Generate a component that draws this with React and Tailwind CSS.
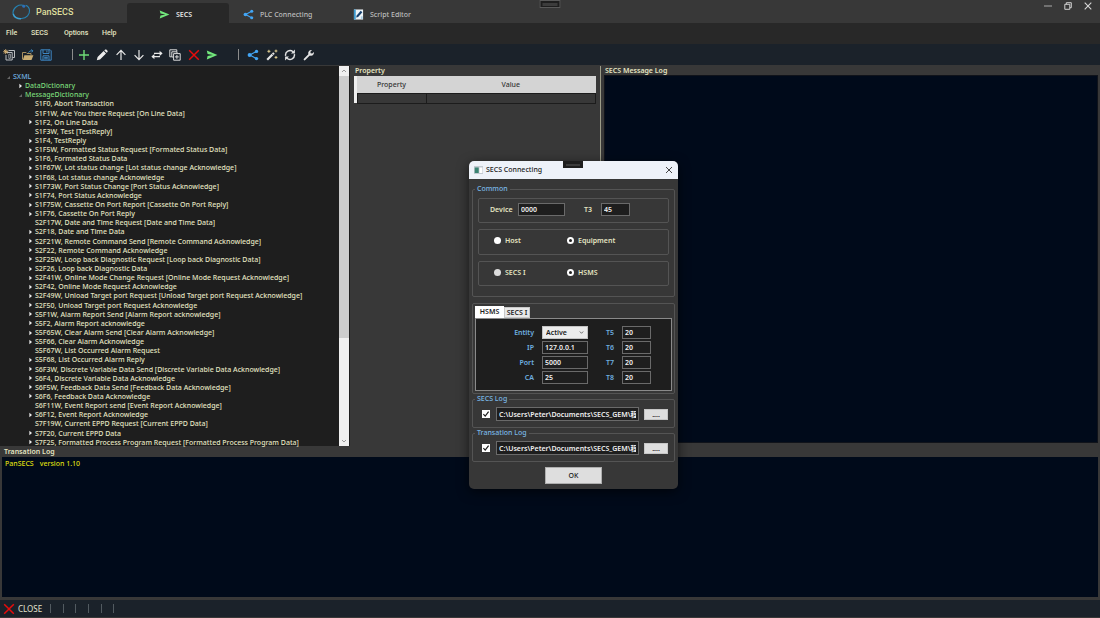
import React, { useState } from "react";

const messages = [
  [0, "S1F0, Abort Transaction"],
  [0, "S1F1W, Are You there Request [On Line Data]"],
  [1, "S1F2, On Line Data"],
  [0, "S1F3W, Test [TestReply]"],
  [1, "S1F4, TestReply"],
  [1, "S1F5W, Formatted Status Request [Formated Status Data]"],
  [1, "S1F6, Formated Status Data"],
  [1, "S1F67W, Lot status change [Lot status change Acknowledge]"],
  [1, "S1F68, Lot status change Acknowledge"],
  [1, "S1F73W, Port Status Change [Port Status Acknowledge]"],
  [1, "S1F74, Port Status Acknowledge"],
  [1, "S1F75W, Cassette On Port Report [Cassette On Port Reply]"],
  [1, "S1F76, Cassette On Port Reply"],
  [0, "S2F17W, Date and Time Request [Date and Time Data]"],
  [1, "S2F18, Date and Time Data"],
  [1, "S2F21W, Remote Command Send [Remote Command Acknowledge]"],
  [1, "S2F22, Remote Command Acknowledge"],
  [1, "S2F25W, Loop back Diagnostic Request [Loop back Diagnostic Data]"],
  [1, "S2F26, Loop back Diagnostic Data"],
  [1, "S2F41W, Online Mode Change Request [Online Mode Request Acknowledge]"],
  [1, "S2F42, Online Mode Request Acknowledge"],
  [1, "S2F49W, Unload Target port Request [Unload Target port Request Acknowledge]"],
  [1, "S2F50, Unload Target port Request Acknowledge"],
  [1, "S5F1W, Alarm Report Send [Alarm Report acknowledge]"],
  [1, "S5F2, Alarm Report acknowledge"],
  [1, "S5F65W, Clear Alarm Send [Clear Alarm Acknowledge]"],
  [1, "S5F66, Clear Alarm Acknowledge"],
  [0, "S5F67W, List Occurred Alarm Request"],
  [1, "S5F68, List Occurred Alarm Reply"],
  [1, "S6F3W, Discrete Variable Data Send [Discrete Variable Data Acknowledge]"],
  [1, "S6F4, Discrete Variable Data Acknowledge"],
  [1, "S6F5W, Feedback Data Send [Feedback Data Acknowledge]"],
  [1, "S6F6, Feedback Data Acknowledge"],
  [0, "S6F11W, Event Report send [Event Report Acknowledge]"],
  [1, "S6F12, Event Report Acknowledge"],
  [0, "S7F19W, Current EPPD Request [Current EPPD Data]"],
  [1, "S7F20, Current EPPD Data"],
  [1, "S7F25, Formatted Process Program Request [Formatted Process Program Data]"],
];

const Svg = ({ children, className = "size-3" }) => (
  <svg viewBox="0 0 12 12" fill="none" className={className} aria-hidden="true">
    {children}
  </svg>
);

const SendIcon = ({ className }) => (
  <Svg className={className}>
    <path d="M.8 1.6 11.4 6 .8 10.4 1.6 7 7 6 1.6 5z" fill="#72e87c" />
  </Svg>
);
const ShareIcon = ({ className }) => (
  <Svg className={className}>
    <path d="M9.4 2.4 2.8 6l6.6 3.6" stroke="#42a5f5" strokeWidth="1.2" />
    <circle cx="9.5" cy="2.4" r="1.7" fill="#42a5f5" />
    <circle cx="2.6" cy="6" r="2" fill="#42a5f5" />
    <circle cx="9.5" cy="9.6" r="1.7" fill="#42a5f5" />
  </Svg>
);
const NewIcon = () => (
  <Svg>
    <path d="M5.5 1.5h6v7h-2M4 3.5h5.2v7.5H3V6" stroke="#b9bcbf" />
    <path d="M5.8 5.2v4.2h1.6V5.2z" stroke="#b9bcbf" strokeWidth=".7" />
    <path d="M2.7.2v5M.2 2.7h5M.9.9l3.6 3.6M4.5.9.9 4.5" stroke="#dcb878" strokeWidth=".9" />
  </Svg>
);
const OpenIcon = () => (
  <Svg>
    <path d="M.5 10.5v-7h3.6l1 1H9v1.700" stroke="#a88f5e" />
    <path d="M2.4 6.2h9L9.5 11H.8z" fill="#c9ac72" />
    <path d="M6.5 3.6c1-1.7 2.3-2 4-1.7M9.3.5l1.6 1.4-1.5 1.5" stroke="#3f8cc4" />
  </Svg>
);
const SaveIcon = () => (
  <Svg>
    <path d="M.8.8h9.4l1 1v9.4H.8zM3 .8v3.7h6V.8M3 11.2V6.8h6v4.4M6.9 1.5v2M4.2 8.4h3.6M4.2 9.8h3.6" stroke="#3d86c2" />
  </Svg>
);
const PlusIcon = () => (
  <Svg>
    <path d="M6 1v10M1 6h10" stroke="#6fdc78" strokeWidth="1.4" />
  </Svg>
);
const PencilIcon = () => (
  <Svg>
    <path d="m.8 11.2.8-3.1L7.6 2l2.4 2.4-6 6zM8.3 1.4l.8-.8q.6-.4 1.2 0l1.2 1.2q.4.6 0 1.1l-.8.8z" fill="#ececec" />
  </Svg>
);
const UpIcon = () => (
  <Svg>
    <path d="M6 11V1.4M1.6 5.8 6 1.4l4.4 4.4" stroke="#e8e8e8" strokeWidth="1.2" />
  </Svg>
);
const DownIcon = () => (
  <Svg>
    <path d="M6 1v9.6M1.6 6.2 6 10.6l4.4-4.4" stroke="#e8e8e8" strokeWidth="1.2" />
  </Svg>
);
const SwapIcon = () => (
  <Svg>
    <path d="M3 4.4h8M1 7.6h8" stroke="#e8e8e8" strokeWidth="1.1" />
    <path d="m8.6 1.8 3 2.6-3 2.6zM3.4 5 .4 7.6l3 2.6z" fill="#e8e8e8" />
  </Svg>
);
const CopyIcon = () => (
  <Svg>
    <path d="M2.6 7.8H.8V.8h7v1.8M8 4.2V2.8H2.8V8h1.4M4.6 4.6h6.6v6.6H4.6z" stroke="#dcdcdc" />
    <path d="M7.9 6v3.8M6 7.9h3.8" stroke="#dcdcdc" />
  </Svg>
);
const RedX = () => (
  <Svg>
    <path d="m1.2 1.2 9.6 9.6M10.8 1.2l-9.6 9.6" stroke="#e80c0c" strokeWidth="1.5" />
  </Svg>
);
const WandIcon = () => (
  <Svg>
    <path d="M1.2 10.8 8 4" stroke="#e4e4e4" strokeWidth="2.200" />
    <path d="M5.600 4.400 7.600 6.400" stroke="#1b222a" strokeWidth=".7" />
    <path d="M2.9.8v3M1.4 2.3h3M10 .6v2.8M8.6 2h2.8M10 7v2.8M8.6 8.4h2.8" stroke="#e2cf92" strokeWidth="1" />
  </Svg>
);
const RefreshIcon = () => (
  <Svg>
    <path d="M1.6 6.8A4.5 4.5 0 0 1 9 2.7M10.4 5.2A4.5 4.5 0 0 1 3 9.3" stroke="#e4e4e4" strokeWidth="1.4" />
    <path d="M10.9.6v4H7zM1.1 11.4v-4H5z" fill="#e4e4e4" />
  </Svg>
);
const WrenchIcon = () => (
  <Svg>
    <path d="m1.6 10.4 5-5" stroke="#e4e4e4" strokeWidth="1.9" strokeLinecap="round" />
    <path d="M10.9 2.9 9.2 4.5 7.6 4.3 7.4 2.8 9 1.1A3.1 3.1 0 0 0 5.3 5q.7 2 2.8 1.7a3.1 3.1 0 0 0 2.8-3.8z" fill="#e4e4e4" />
  </Svg>
);
const ScriptIcon = ({ className }) => (
  <Svg className={className}>
    <path d="M1 .5h10v11H1z" fill="#eef4f8" />
    <path d="M1 .5h2v11H1z" fill="#3d9bd0" />
    <path d="M3.4 9.2 4 7l4.4-5 1.8 1.6-4.6 5z" fill="#17406e" />
    <path d="M8.6 8h2v3h-2z" fill="#a9cbe0" />
  </Svg>
);

const ToolButton = ({ label, icon: Icon }) => (
  <button type="button" aria-label={label} className="block">
    <Icon />
  </button>
);

const MainTab = ({ label, icon: Icon, active, className, onClick }) => (
  <button
    type="button"
    role="tab"
    aria-selected={active}
    onClick={onClick}
    className={`mt-[3px] flex h-5 items-center gap-[6px] rounded-t-[3px] pt-[3px] ${className} ${
      active ? "bg-[#282828] font-semibold text-[#e6e6e6]" : "font-medium text-[#bdbdbd]"
    }`}
  >
    <Icon className="size-[11px]" />
    {label}
  </button>
);

const TreeRow = ({ open, branch, label, depth, color = "text-[#e4e4c2]" }) => (
  <li
    role="treeitem"
    aria-expanded={branch ? open : undefined}
    className={`flex min-h-0 flex-1 items-center gap-[2px] leading-[9px] ${depth} ${color}`}
  >
    <span className="flex w-[6px] justify-center">
      {branch && (
        <button type="button" aria-label={`Toggle ${label}`} className="block">
          <svg viewBox="0 0 5 6" className="h-[6px] w-[5px]" aria-hidden="true">
            {open ? <path d="M4 2v3H1z" fill="#686868" /> : <path d="M1.4.8 4 3 1.4 5.2z" fill="#ededed" />}
          </svg>
        </button>
      )}
    </span>
    <span className="whitespace-nowrap">{label}</span>
  </li>
);

const inputBase = "border border-[#6a6a6a] bg-[#1e1e1e] px-[2px] font-semibold text-[#f0f0f0] outline-none";

const Radio = ({ name, id, label, muted, hollow, defaultChecked }) => (
  <div className="flex items-center gap-[4px]">
    <input
      type="radio"
      id={id}
      name={name}
      defaultChecked={defaultChecked}
      className={`size-[7px] appearance-none rounded-full ${
        hollow ? "border-2 border-white bg-[#222]" : muted ? "bg-[#dcdcdc]" : "bg-white"
      }`}
    />
    <label htmlFor={id}>{label}</label>
  </div>
);

const groupBox = "rounded-[2px] border border-[#545454]";

const LogGroup = ({ title, id }) => (
  <fieldset className={`${groupBox} mt-px pt-1 pr-[6px] pb-[6px] pl-[9px]`}>
    <legend className="-ml-[7px] px-[2px] leading-[8px] font-medium text-[#7ab8e6]">{title}</legend>
    <div className="flex items-center">
      <span className="relative block size-[8px]">
        <input
          type="checkbox"
          defaultChecked
          aria-label={`Enable ${title}`}
          className="peer block size-[8px] appearance-none bg-white"
        />
        <svg viewBox="0 0 8 8" fill="none" className="pointer-events-none absolute inset-0 hidden size-2 peer-checked:block" aria-hidden="true">
          <path d="m1.4 4.2 1.8 1.9 3.4-4.4" stroke="#1c1c1c" strokeWidth="1.2" />
        </svg>
      </span>
      <input
        id={id}
        type="text"
        aria-label={`${title} path`}
        defaultValue={"C:\\Users\\Peter\\Documents\\SECS_GEM\\程"}
        className={`${inputBase} ml-[6px] h-[14px] min-w-0 flex-1`}
      />
      <button type="button" className="ml-[5px] h-[11px] w-[24px] border border-[#c6c6c6] bg-[#dedede] leading-[9px] text-[#222]" aria-label={`Browse ${title}`}>
        ....
      </button>
    </div>
  </fieldset>
);

const Field = ({ id, label, value }) => (
  <>
    <label htmlFor={id} className="self-center pr-2 text-right text-[#6fb0e0]">
      {label}
    </label>
    <input id={id} type="text" defaultValue={value} className={`${inputBase} h-[13px] w-full min-w-0`} />
  </>
);

function ConnectingDialog() {
  return (
    <section
      role="dialog"
      aria-label="SECS Connecting"
      className="absolute top-[161px] left-[469px] w-[209px] overflow-hidden rounded-[5px] bg-[#373737] font-semibold text-[#e4e4c2] shadow-[0_3px_12px_rgba(0,0,0,0.6)]"
    >
      <header className="relative flex h-[18px] items-center bg-[#eef2f9] px-[5px] pb-px font-medium text-[#1c1c1c]">
        <svg viewBox="0 0 9 8" className="h-2 w-[9px]" aria-hidden="true">
          <path d="M0 0h9v8H0z" fill="#c3cad2" />
          <path d="M.7 1.4h4V7h-4z" fill="#3a8372" />
          <path d="M5.4 1.4h3V7h-3z" fill="#fff" />
        </svg>
        <span className="ml-[3px] flex-1">SECS Connecting</span>
        <button type="button" aria-label="Close dialog">
          <svg viewBox="0 0 8 8" className="size-2" aria-hidden="true">
            <path d="m1 1 6 6M7 1 1 7" stroke="#333" strokeWidth=".9" />
          </svg>
        </button>
        <span className="absolute top-0 left-[94px] flex h-[7px] w-[20px] items-center justify-center bg-[#1e1e1e]">
          <span className="h-[2px] w-[14px] bg-[#3c3c3c]" />
        </span>
      </header>

      <form className="px-[3px] pt-[6px] pb-[5px]" onSubmit={(e) => e.preventDefault()}>
        <fieldset className={`${groupBox} px-[5px] pt-[5px] pb-[10px]`}>
          <legend className="-ml-[3px] px-[2px] leading-[8px] font-medium text-[#7ab8e6]">Common</legend>
          <div className={`${groupBox} flex h-[25px] items-center pb-[3px] pl-[11px]`}>
            <label htmlFor="device" className="w-[28px]">Device</label>
            <input id="device" type="text" defaultValue="0000" className={`${inputBase} h-[13px] w-[47px]`} />
            <label htmlFor="t3" className="ml-[19px] w-[17px]">T3</label>
            <input id="t3" type="text" defaultValue="45" className={`${inputBase} h-[13px] w-[29px]`} />
          </div>
          <div className={`${groupBox} mt-[6px] grid h-[26px] grid-cols-[73px_1fr] items-center pb-[3px] pl-[15px]`}>
            <Radio id="host" name="role" label="Host" />
            <Radio id="equipment" name="role" label="Equipment" hollow defaultChecked />
          </div>
          <div className={`${groupBox} mt-[6px] grid h-[25px] grid-cols-[73px_1fr] items-center pb-[3px] pl-[15px]`}>
            <Radio id="secs1" name="protocol" label="SECS I" muted />
            <Radio id="hsms" name="protocol" label="HSMS" hollow defaultChecked />
          </div>
        </fieldset>

        <div className={`${groupBox} mt-[6px] p-[2px]`}>
          <div role="tablist" className="flex h-3 items-end">
            <button type="button" role="tab" aria-selected="true" className="h-3 w-[29px] bg-white leading-[12px] text-[#222]">
              HSMS
            </button>
            <button type="button" role="tab" aria-selected="false" className="h-[11px] w-[26px] border border-[#c8c8c8] bg-[#e8e8e8] leading-[10px] text-[#222]">
              SECS I
            </button>
          </div>
          <div className="grid grid-cols-[66px_46px_34px_29px] gap-y-[2px] border border-[#8a8a8a] bg-[#1e1e1e] pt-[7px] pb-[6px]">
            <label htmlFor="entity" className="self-center pr-2 text-right text-[#6fb0e0]">Entity</label>
            <div className="relative">
              <select id="entity" className="block h-[13px] w-full appearance-none border border-[#c4c4c4] bg-[#ececec] px-[3px] leading-[11px] text-[#222]">
                <option>Active</option>
                <option>Passive</option>
              </select>
              <svg viewBox="0 0 5 5" fill="none" className="pointer-events-none absolute top-1 right-1 size-[5px]" aria-hidden="true">
                <path d="m.8 1.5 1.7 1.8 1.7-1.8" stroke="#555" strokeWidth=".8" />
              </svg>
            </div>
            <Field id="t5" label="T5" value="20" />
            <Field id="ip" label="IP" value="127.0.0.1" />
            <Field id="t6" label="T6" value="20" />
            <Field id="port" label="Port" value="5000" />
            <Field id="t7" label="T7" value="20" />
            <Field id="ca" label="CA" value="25" />
            <Field id="t8" label="T8" value="20" />
          </div>
        </div>

        <LogGroup title="SECS Log" id="secs-log" />
        <LogGroup title="Transation Log" id="transation-log" />

        <button type="submit" className="mx-auto mt-[5px] block h-[17px] w-[57px] border border-[#aeaeae] bg-[#dedede] font-medium text-[#222]">
          OK
        </button>
      </form>
    </section>
  );
}

export default function App() {
  const [tab, setTab] = useState("SECS");
  return (
    <div className="relative flex h-screen flex-col overflow-hidden bg-[#383838] font-['Noto_Sans','Noto_Sans_CJK_SC',sans-serif] text-[7px] leading-[9px] text-[#e4e4c2]">
      <header className="flex h-[23px] shrink-0">
        <div className="flex w-[127px] items-center gap-[5px] pl-3">
          <svg viewBox="0 0 19 17" fill="none" className="h-[17px] w-[19px]" aria-hidden="true">
            <path d="M12 2.5C6.6.8 1.4 4.4 1 9.2c-.2 4.4 4.2 6.7 8.6 6.3C14.5 15 18 11.5 17.5 7.3 17.2 4.8 15.6 3 13.6 2.3" stroke="#2583b4" strokeWidth="1.1" />
            <path d="M1.3 11c.6 3 4 4.9 7.7 4.7" stroke="#3fa0d0" strokeWidth="1.4" />
            <circle cx="11.8" cy="3.2" r="1.5" fill="#2d6fb8" />
          </svg>
          <span className="font-[Roboto,sans-serif] text-[9px] leading-[12px] font-medium text-[#dede9e]">PanSECS</span>
        </div>
        <div role="tablist" className="flex flex-1">
          <MainTab label="SECS" icon={SendIcon} active={tab === "SECS"} onClick={() => setTab("SECS")} className="w-[102px] pl-8" />
          <MainTab label="PLC Connecting" icon={ShareIcon} active={tab === "PLC"} onClick={() => setTab("PLC")} className="w-[110px] pl-[14px]" />
          <MainTab label="Script Editor" icon={ScriptIcon} active={tab === "Script"} onClick={() => setTab("Script")} className="w-[110px] pl-[14px]" />
        </div>
        <div className="flex h-3 items-center gap-3 pr-2">
          <button type="button" aria-label="Minimize">
            <svg viewBox="0 0 8 8" className="size-2" aria-hidden="true"><path d="M0 4h8" stroke="#aaa" /></svg>
          </button>
          <button type="button" aria-label="Restore">
            <svg viewBox="0 0 8 8" fill="none" className="size-2" aria-hidden="true">
              <path d="M.8 2.3h5v5h-5zM2.3 2.3V.7h5v5H5.800" stroke="#d0d0d0" />
            </svg>
          </button>
          <button type="button" aria-label="Close">
            <svg viewBox="0 0 8 8" className="size-2" aria-hidden="true"><path d="m.7.7 6.6 6.6M7.3.7.7 7.3" stroke="#d8d8d8" strokeWidth="1.1" /></svg>
          </button>
        </div>
      </header>
      <span className="absolute top-0 left-1/2 flex h-[8px] w-[21px] -translate-x-1/2 items-center justify-center border border-[#5a5a5a] bg-[#1e1e1e]">
        <span className="h-[3px] w-[15px] bg-[#3c3c3c]" />
      </span>

      <nav className="flex h-[21px] shrink-0 items-center bg-[#282828] pl-[6px] font-[Roboto,sans-serif] font-medium">
        <button type="button" className="w-[25px] text-left">File</button>
        <button type="button" className="w-[33px] text-left">SECS</button>
        <button type="button" className="w-[38px] text-left">Options</button>
        <button type="button" className="text-left">Help</button>
      </nav>

      <div role="toolbar" aria-label="Tools" className="flex h-[22px] shrink-0 items-center border-b border-[#383838] bg-[#1b222a] pl-[3px]">
        <div className="flex w-[49px] justify-between">
          <ToolButton label="New" icon={NewIcon} />
          <ToolButton label="Open" icon={OpenIcon} />
          <ToolButton label="Save" icon={SaveIcon} />
        </div>
        <span className="mr-[5px] ml-5 h-[11px] w-px bg-[#8c8c8c]" />
        <div className="flex w-[140px] justify-between">
          <ToolButton label="Add" icon={PlusIcon} />
          <ToolButton label="Edit" icon={PencilIcon} />
          <ToolButton label="Move up" icon={UpIcon} />
          <ToolButton label="Move down" icon={DownIcon} />
          <ToolButton label="Swap" icon={SwapIcon} />
          <ToolButton label="Duplicate" icon={CopyIcon} />
          <ToolButton label="Delete" icon={RedX} />
          <ToolButton label="Send" icon={SendIcon} />
        </div>
        <span className="mr-2 ml-5 h-[11px] w-px bg-[#8c8c8c]" />
        <div className="flex w-[68px] justify-between">
          <ToolButton label="Connect" icon={ShareIcon} />
          <ToolButton label="Wizard" icon={WandIcon} />
          <ToolButton label="Refresh" icon={RefreshIcon} />
          <ToolButton label="Settings" icon={WrenchIcon} />
        </div>
      </div>

      <main className="flex min-h-0 flex-1">
        <div className="flex w-[350px] shrink-0 bg-[#1e1e1e] font-medium">
          <ul role="tree" aria-label="SXML" className="-mb-px flex min-w-0 flex-1 flex-col overflow-hidden pt-[6px]">
            <TreeRow branch open label="SXML" depth="pl-[5px]" color="text-[#6fb0e0]" />
            <TreeRow branch label="DataDictionary" depth="pl-[17px]" color="text-[#7ada7a]" />
            <TreeRow branch open label="MessageDictionary" depth="pl-[17px]" color="text-[#7ada7a]" />
            {messages.map(([branch, label]) => (
              <TreeRow key={label} branch={branch === 1} open={false} label={label} depth="pl-[27px]" />
            ))}
          </ul>
          <div className="mr-px flex w-[10px] flex-col bg-[#f0f0f0]" aria-hidden="true">
            <svg viewBox="0 0 10 10" fill="none" className="size-[10px]"><path d="m3 6 2-2 2 2" stroke="#9a9a9a" /></svg>
            <span className="h-[262px] bg-[#cdcdcd]" />
            <span className="flex-1" />
            <svg viewBox="0 0 10 10" fill="none" className="size-[10px]"><path d="m3 4 2 2 2-2" stroke="#9a9a9a" /></svg>
          </div>
        </div>

        <section className="mb-[3px] w-[251px] shrink-0 border-r border-[#9c9c88] pl-1">
          <h2 className="h-[10px] pl-px font-semibold">Property</h2>
          <table className="w-[242px] border-collapse">
            <thead>
              <tr className="h-[17px] bg-[#d4d4d4] text-[#333]">
                <th className="w-[3px] bg-[#efefef] p-0" aria-label="Row" />
                <th className="w-[69px] p-0 font-medium">Property</th>
                <th className="p-0 font-medium">Value</th>
              </tr>
            </thead>
            <tbody>
              <tr className="h-[10px]">
                <td className="bg-[#efefef] p-0" />
                <td className="border border-[#1c1c1c] p-0" />
                <td className="border border-[#1c1c1c] p-0" />
              </tr>
            </tbody>
          </table>
        </section>

        <section className="mb-[3px] flex min-w-0 flex-1 flex-col pr-[2px] pl-[3px]">
          <h2 className="h-[9px] pl-px font-semibold">SECS Message Log</h2>
          <div className="flex-1 border border-[#10131a] bg-[#000a1a]" role="log" aria-label="SECS Message Log" />
        </section>
      </main>

      <section className="flex h-[151px] shrink-0 flex-col pr-[2px] pl-[2px]">
        <h2 className="h-[11px] pl-[2px] leading-[12px] font-semibold">Transation Log</h2>
        <div role="log" aria-label="Transation Log" className="flex-1 bg-[#000a1a] pt-[2px] pl-[3px] font-medium text-[#dede10]">
          <span className="mr-[6px]">PanSECS</span>
          <span>version 1.10</span>
        </div>
      </section>

      <footer className="mt-[3px] mb-px flex h-[17px] shrink-0 items-center bg-[#1b222a] pl-[3px]">
        <button type="button" className="flex items-center gap-[3px] text-[8px] leading-[10px] text-[#e4e4d0]">
          <RedX />
          CLOSE
        </button>
        <div className="ml-2 flex w-[64px] justify-between" aria-hidden="true">
          {[0, 1, 2, 3, 4, 5].map((n) => (
            <span key={n} className="h-[9px] w-px bg-[#525a60]" />
          ))}
        </div>
      </footer>

      <ConnectingDialog />
    </div>
  );
}
